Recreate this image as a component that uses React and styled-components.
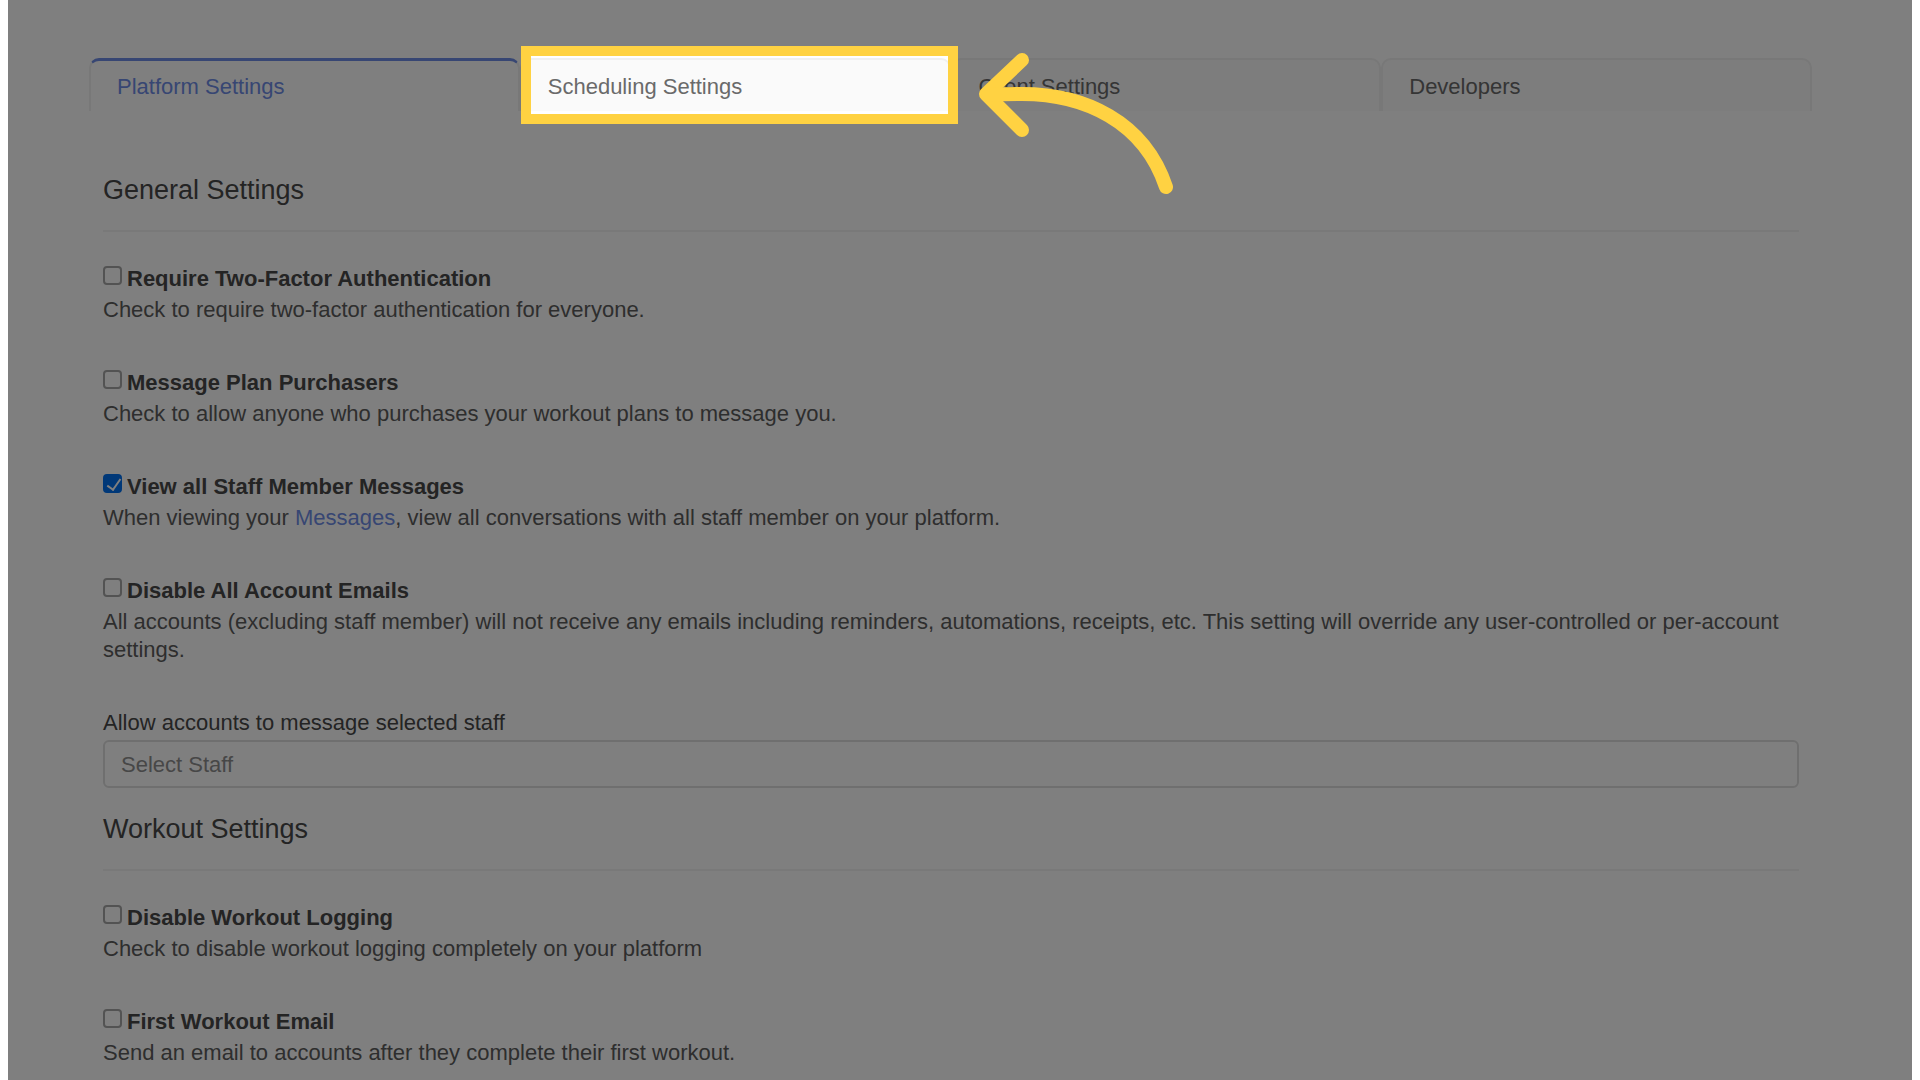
import React from "react";
import styled, { createGlobalStyle } from "styled-components";

const GlobalStyle = createGlobalStyle`
  * {
    box-sizing: border-box;
  }
  body {
    margin: 0;
    background: #fff;
    color: #5c5c5c;
    font-family: "Liberation Sans", Arial, Helvetica, sans-serif;
    font-size: 22px;
    line-height: 28px;
  }
`;

// clips the shade so the page keeps its white side margins
const Page = styled.div`
  position: relative;
  overflow: hidden;
  min-height: 100vh;
  margin: 0 8px;
  padding: 58px 100px 16px 81px;
`;

const Tabs = styled.nav`
  display: grid;
  grid-template-columns: repeat(4, 1fr);
`;

const TabItem = styled.div`
  position: relative;
`;

const Tab = styled.button`
  display: block;
  width: 100%;
  height: 53px;
  padding: 3px 26px 0;
  border: 2px solid #f0f0f0;
  border-bottom: 0;
  border-radius: 10px 10px 0 0;
  background: #fafafa;
  color: #6a6a6a;
  font: inherit;
  text-align: left;
  cursor: pointer;

  &[aria-current="page"] {
    padding-top: 2px;
    border-top: 3px solid #6f8de6;
    background: #fff;
    color: #6f8de6;
  }
`;

const Spotlight = styled.div`
  position: absolute;
  z-index: 2;
  top: -12px;
  right: -7px;
  bottom: -13px;
  left: 1px;
  border: 10px solid #ffd242;
  box-shadow: 0 0 0 4000px rgba(0, 0, 0, 0.5);
  pointer-events: none;
`;

const Arrow = styled.svg`
  position: absolute;
  top: -4px;
  left: calc(100% + 26px);
  width: 200px;
  height: 150px;
`;

const Content = styled.main`
  padding: 61px 13px 0 14px;
`;

const Heading = styled.h2`
  margin: 0 0 33px;
  padding-bottom: 22px;
  border-bottom: 2px solid #f2f2f2;
  color: #484848;
  font-size: 27px;
  font-weight: 400;
  line-height: 36px;
`;

const Setting = styled.div`
  display: flex;
  flex-direction: column;
  gap: 3px;
  margin-bottom: 45px;
`;

const SettingLabel = styled.label`
  display: flex;
  gap: 5px;
  color: #484848;
  font-weight: 700;
`;

const Checkbox = styled.input`
  appearance: none;
  position: relative;
  flex: none;
  width: 19px;
  height: 19px;
  margin: 1px 0 0;
  border: 2px solid #a6a6a6;
  border-radius: 4px;

  &:checked {
    border-color: #0070f0;
    background: #0070f0;
  }
  &:checked::after {
    content: "";
    position: absolute;
    top: 0;
    left: 5px;
    width: 6px;
    height: 12px;
    border: solid #fff;
    border-width: 0 2px 2px 0;
    transform: rotate(35deg);
  }
`;

const Description = styled.p`
  margin: 0;
`;

const TextLink = styled.a`
  color: #6f8de6;
  text-decoration: none;
`;

const Field = styled.div`
  display: flex;
  flex-direction: column;
  gap: 3px;
  margin-bottom: 23px;
`;

const FieldLabel = styled.label`
  color: #484848;
`;

const TextInput = styled.input`
  width: 100%;
  height: 48px;
  padding: 2px 16px 0;
  border: 2px solid #dedede;
  border-radius: 6px;
  background: #fff;
  font: inherit;

  &::placeholder {
    color: #8f8f8f;
    opacity: 1;
  }
`;

const tabs = ["Platform Settings", "Scheduling Settings", "Client Settings", "Developers"];

const generalSettings = [
  {
    id: "two-factor",
    title: "Require Two-Factor Authentication",
    text: "Check to require two-factor authentication for everyone.",
  },
  {
    id: "message-purchasers",
    title: "Message Plan Purchasers",
    text: "Check to allow anyone who purchases your workout plans to message you.",
  },
  {
    id: "view-messages",
    title: "View all Staff Member Messages",
    checked: true,
    text: (
      <>
        When viewing your <TextLink href="#messages">Messages</TextLink>, view all conversations with
        all staff member on your platform.
      </>
    ),
  },
  {
    id: "disable-emails",
    title: "Disable All Account Emails",
    text: "All accounts (excluding staff member) will not receive any emails including reminders, automations, receipts, etc. This setting will override any user-controlled or per-account settings.",
  },
];

const workoutSettings = [
  {
    id: "disable-logging",
    title: "Disable Workout Logging",
    text: "Check to disable workout logging completely on your platform",
  },
  {
    id: "first-workout",
    title: "First Workout Email",
    text: "Send an email to accounts after they complete their first workout.",
  },
];

const SettingRow = ({ setting }) => (
  <Setting>
    <SettingLabel htmlFor={setting.id}>
      <Checkbox type="checkbox" id={setting.id} defaultChecked={setting.checked} />
      {setting.title}
    </SettingLabel>
    <Description>{setting.text}</Description>
  </Setting>
);

const Highlight = () => (
  <Spotlight>
    <Arrow viewBox="0 0 200 150" fill="none" stroke="#ffd242" strokeWidth="14" strokeLinecap="round" strokeLinejoin="round" aria-hidden="true">
      <path d="M48 8 L12 42 L48 78" />
      <path d="M14 43 C25 42 36 42 48 42 C110 42 170 69 192 135" />
    </Arrow>
  </Spotlight>
);

const App = () => {
  return (
    <>
      <GlobalStyle />
      <Page>
        <Tabs>
          {tabs.map((name, i) => (
            <TabItem key={name}>
              <Tab type="button" aria-current={i === 0 ? "page" : undefined}>
                {name}
              </Tab>
              {i === 1 && <Highlight />}
            </TabItem>
          ))}
        </Tabs>
        <Content>
          <Heading>General Settings</Heading>
          {generalSettings.map((s) => (
            <SettingRow key={s.id} setting={s} />
          ))}
          <Field>
            <FieldLabel htmlFor="staff">Allow accounts to message selected staff</FieldLabel>
            <TextInput id="staff" type="text" placeholder="Select Staff" />
          </Field>
          <Heading>Workout Settings</Heading>
          {workoutSettings.map((s) => (
            <SettingRow key={s.id} setting={s} />
          ))}
        </Content>
      </Page>
    </>
  );
};

export default App;
